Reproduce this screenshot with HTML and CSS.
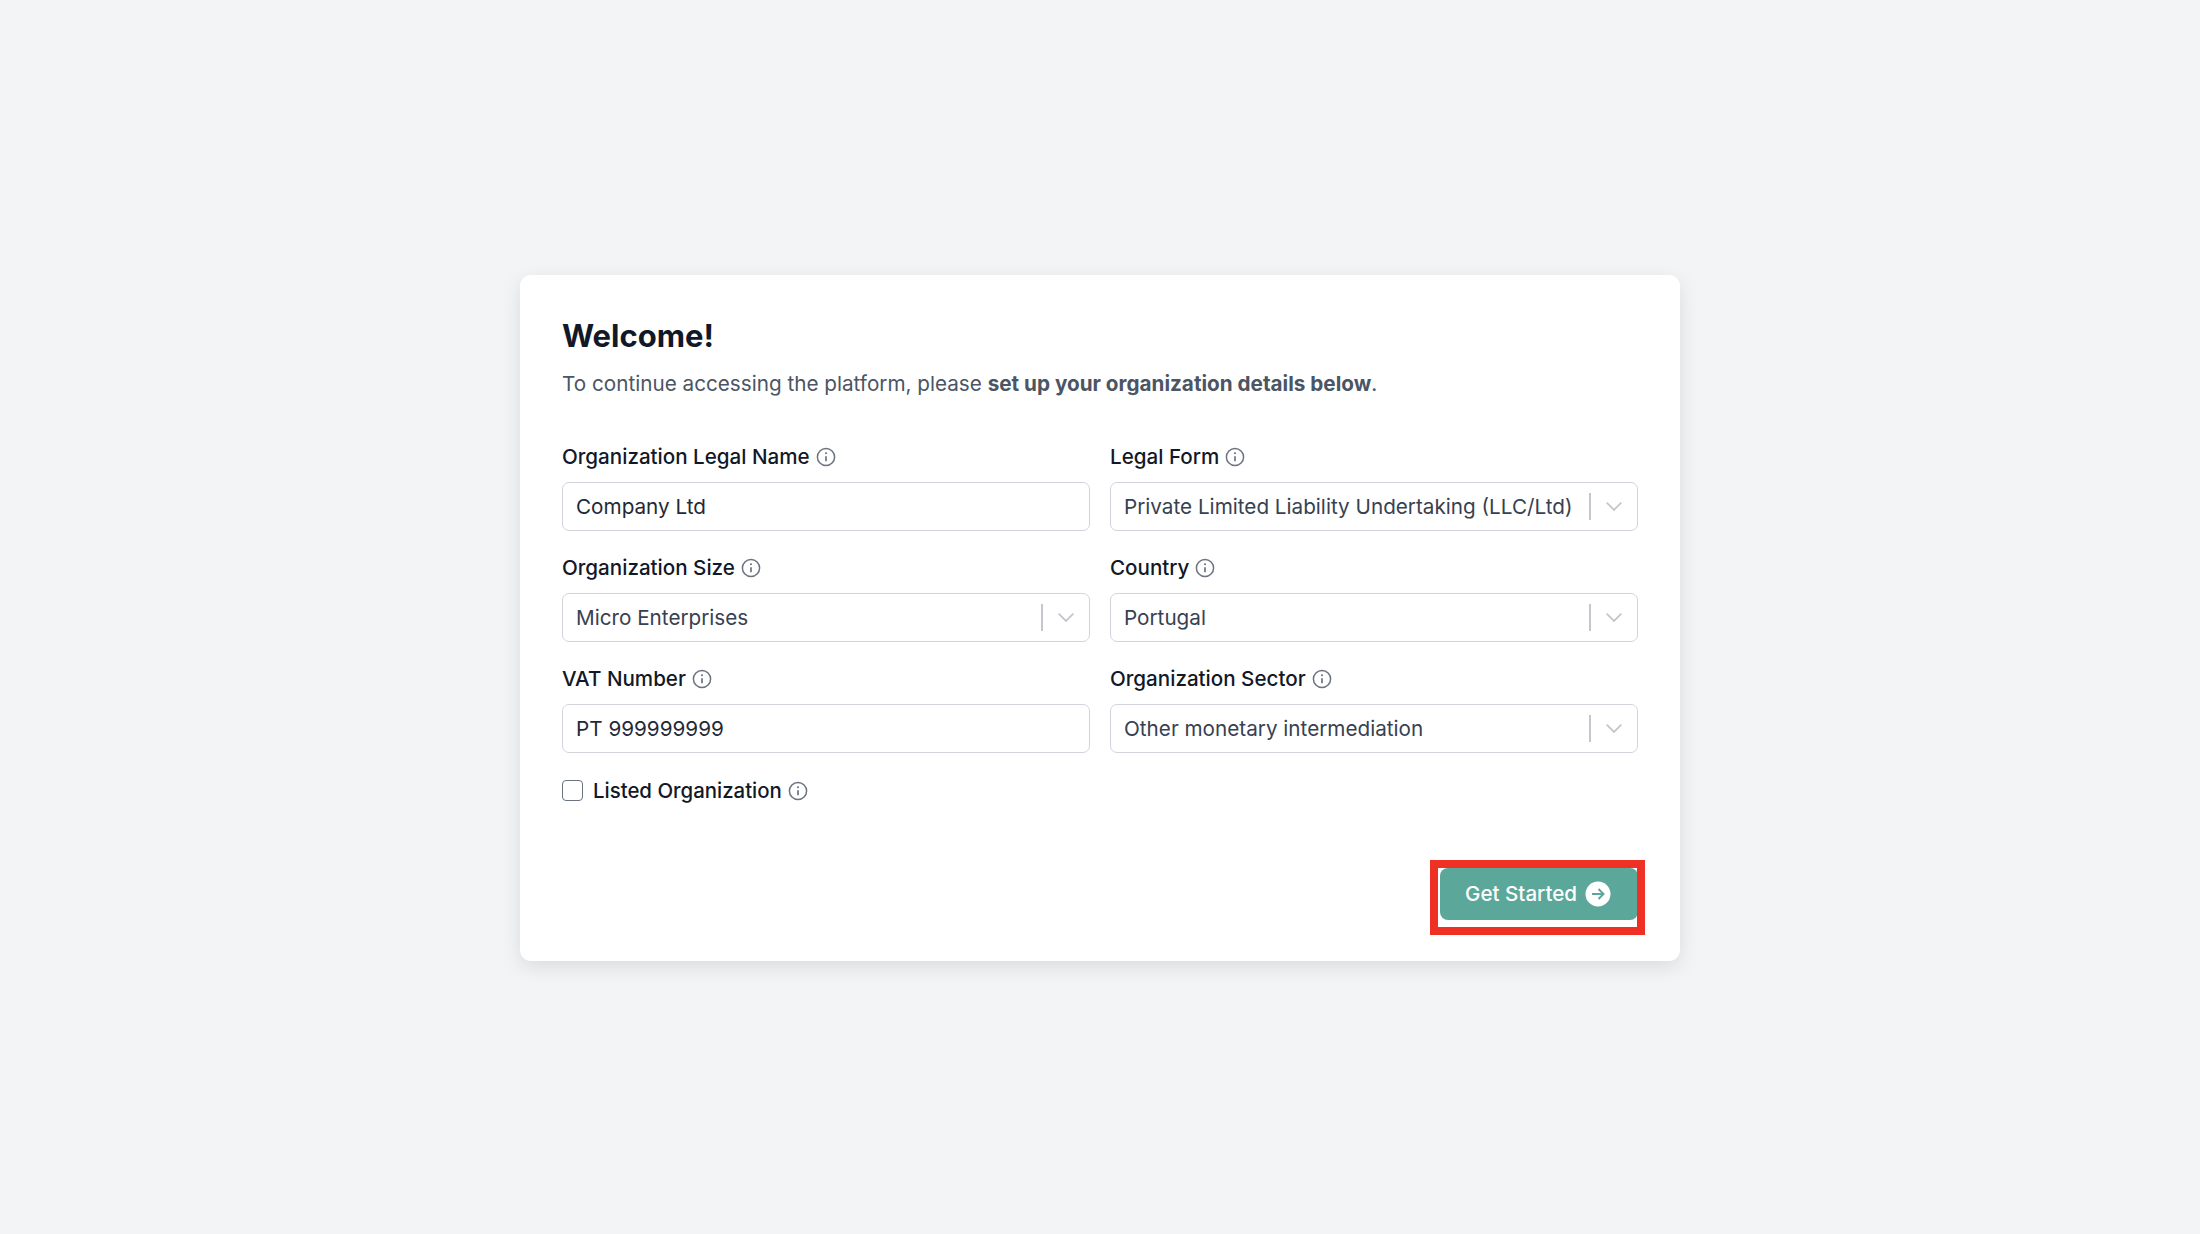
FILE: index.html
```html
<!DOCTYPE html>
<html lang="en">
<head>
    <meta charset="UTF-8">
    <meta name="viewport" content="width=device-width, initial-scale=1.0">
    <title>Welcome</title>
    <link rel="stylesheet" href="styles.css">
</head>
<body>
    <svg class="icon-defs" width="0" height="0">
        <symbol id="info" viewBox="0 0 20 20">
            <circle cx="10" cy="10" r="8.6" fill="none" stroke="currentColor" stroke-width="1.5"/>
            <path d="M10 9.2v5" fill="none" stroke="currentColor" stroke-width="1.7"/>
            <circle cx="10" cy="6.2" r="1.05" fill="currentColor"/>
        </symbol>
        <symbol id="chevron" viewBox="0 0 16 16">
            <path d="M1.5 5 8 11.5 14.5 5" fill="none" stroke="currentColor" stroke-width="1.5"/>
        </symbol>
    </svg>

    <main class="card">
        <h1>Welcome!</h1>
        <p class="intro">To continue accessing the platform, please <strong>set up your organization details below</strong>.</p>

        <form class="form-grid">
            <div class="field">
                <label>Organization Legal Name <svg class="info"><use href="#info"/></svg></label>
                <div class="control"><span class="value dark">Company Ltd</span></div>
            </div>
            <div class="field">
                <label>Legal Form <svg class="info"><use href="#info"/></svg></label>
                <div class="control">
                    <span class="value">Private Limited Liability Undertaking (LLC/Ltd)</span>
                    <span class="divider"></span>
                    <svg class="chevron"><use href="#chevron"/></svg>
                </div>
            </div>
            <div class="field">
                <label>Organization Size <svg class="info"><use href="#info"/></svg></label>
                <div class="control">
                    <span class="value">Micro Enterprises</span>
                    <span class="divider"></span>
                    <svg class="chevron"><use href="#chevron"/></svg>
                </div>
            </div>
            <div class="field">
                <label>Country <svg class="info"><use href="#info"/></svg></label>
                <div class="control">
                    <span class="value">Portugal</span>
                    <span class="divider"></span>
                    <svg class="chevron"><use href="#chevron"/></svg>
                </div>
            </div>
            <div class="field">
                <label>VAT Number <svg class="info"><use href="#info"/></svg></label>
                <div class="control"><span class="value dark">PT 999999999</span></div>
            </div>
            <div class="field">
                <label>Organization Sector <svg class="info"><use href="#info"/></svg></label>
                <div class="control">
                    <span class="value">Other monetary intermediation</span>
                    <span class="divider"></span>
                    <svg class="chevron"><use href="#chevron"/></svg>
                </div>
            </div>
        </form>

        <div class="listed">
            <span class="checkbox"></span>
            <span class="listed-label">Listed Organization</span>
            <svg class="info"><use href="#info"/></svg>
        </div>

        <div class="actions">
            <div class="highlight-wrap">
                <button type="button" class="primary">
                    Get Started
                    <svg class="go" viewBox="0 0 26 26">
                        <circle cx="13" cy="13" r="12.5" fill="#fff"/>
                        <path d="M7 13h11.5M13.5 8l5 5-5 5" fill="none" stroke="#5ba89a" stroke-width="2"/>
                    </svg>
                </button>
                <span class="highlight"></span>
            </div>
        </div>
    </main>
</body>
</html>
```

FILE: styles.css
```css
:root {
    --text-dark: #111827;
    --text-muted: #4b5563;
    --border-color: #d1d5db;
    --primary-color: #5ba89a;
}

body {
    font-family: Inter, "Noto Sans", sans-serif;
    margin: 0;
    min-height: 1234px;
    background-color: #f3f4f6;
    display: flex;
    justify-content: center;
    align-items: flex-start;
    color: var(--text-dark);
}

.icon-defs {
    display: block;
    height: 0;
}

.card {
    box-sizing: border-box;
    width: 1160px;
    height: 686px;
    margin-top: 275px;
    padding: 42px 42px 0;
    background-color: white;
    border-radius: 11px;
    box-shadow: 0 6px 20px rgba(0, 0, 0, 0.1);
}

h1 {
    font-size: 31px;
    line-height: 38px;
    font-weight: 700;
    margin: 0;
}

.intro {
    font-size: 20.7px;
    line-height: 28px;
    color: var(--text-muted);
    margin: 15px 0 0;
}

.form-grid {
    display: grid;
    grid-template-columns: 528px 528px;
    column-gap: 20px;
    row-gap: 23px;
    margin-top: 44.5px;
}

label {
    display: flex;
    align-items: center;
    gap: 6px;
    font-size: 20.6px;
    line-height: 28px;
    font-weight: 500;
    margin-bottom: 11px;
}

.info {
    width: 20px;
    height: 20px;
    color: #6b7280;
    flex: none;
}

.control {
    box-sizing: border-box;
    display: flex;
    align-items: center;
    height: 49px;
    padding: 0 14px 0 13px;
    border: 1.5px solid var(--border-color);
    border-radius: 7px;
    background-color: white;
}

.value {
    flex: 1;
    font-size: 20.7px;
    color: #374151;
    white-space: nowrap;
}

.value.dark {
    color: #1f2937;
}

.divider {
    width: 1.5px;
    height: 27px;
    background-color: #c4c7cc;
}

.chevron {
    width: 18px;
    height: 18px;
    margin-left: 14.5px;
    color: #c2c5ca;
}

.listed {
    display: flex;
    align-items: center;
    margin-top: 24px;
    height: 28px;
}

.checkbox {
    box-sizing: border-box;
    width: 21px;
    height: 21px;
    border: 1.5px solid #6b7280;
    border-radius: 4px;
}

.listed-label {
    font-size: 20.4px;
    font-weight: 500;
    margin: 0 6px 0 10px;
}

.actions {
    display: flex;
    justify-content: flex-end;
    margin-top: 63px;
}

.highlight-wrap {
    position: relative;
}

.primary {
    display: flex;
    align-items: center;
    gap: 8px;
    box-sizing: border-box;
    width: 198px;
    height: 52px;
    padding: 0 0 0 25px;
    border: none;
    border-radius: 8px;
    background-color: var(--primary-color);
    color: white;
    font-family: inherit;
    font-size: 20.6px;
    font-weight: 500;
}

.go {
    width: 26px;
    height: 26px;
}

.highlight {
    position: absolute;
    left: -10px;
    top: -8px;
    width: 215px;
    height: 75px;
    box-sizing: border-box;
    border: 8px solid #ee3124;
}
```
